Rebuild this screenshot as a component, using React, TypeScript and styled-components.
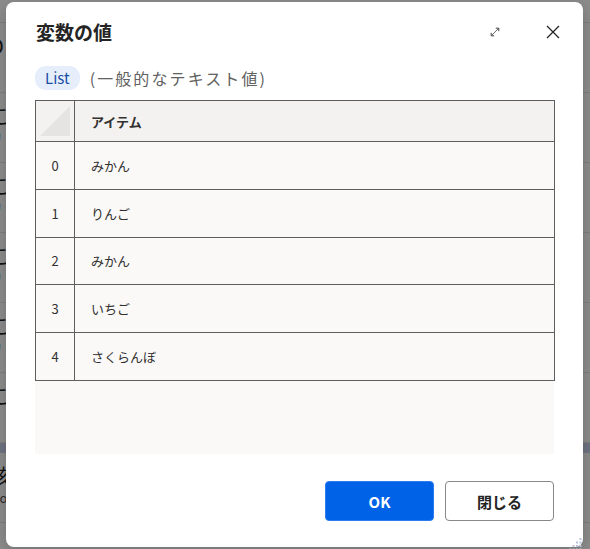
import React from "react";
import styled, { createGlobalStyle } from "styled-components";

const GlobalStyle = createGlobalStyle`
  html, body {
    margin: 0;
    padding: 0;
    width: 590px;
    height: 549px;
    overflow: hidden;
  }
  body {
    font-family: "Noto Sans CJK JP", "Noto Sans", sans-serif;
    color: #242424;
  }
`;

const items = ["みかん", "りんご", "みかん", "いちご", "さくらんぼ"];

const bgRows = [
  { big: "D", small: "E" },
  { big: "こ", small: "リ" },
  { big: "こ", small: "リ" },
  { big: "こ", small: "リ" },
  { big: "こ", small: "リ" },
  { big: "こ", small: "・" },
];

const App: React.FC = () => {
  return (
    <Screen>
      <GlobalStyle />
      <BackApp>
        <BackSpacer />
        {bgRows.map((r, i) => (
          <BackRow key={i}>
            <BackBig>{r.big}</BackBig>
            <BackSmall>{r.small}</BackSmall>
          </BackRow>
        ))}
        <BackBar />
        <BackRow>
          <BackBig>核</BackBig>
          <BackSmall>No</BackSmall>
        </BackRow>
      </BackApp>
      <Overlay>
        <Dialog>
          <Header>
            <Title>変数の値</Title>
            <HeaderActions>
              <IconButton aria-label="expand">
                <svg width="12" height="12" viewBox="0 0 12 12" fill="none">
                  <path d="M2.5 9.5 L9.5 2.5" stroke="#5a5a5a" strokeWidth="0.9" />
                  <path d="M6.8 2.2 H9.8 V5.2" stroke="#424242" strokeWidth="1" />
                  <path d="M2.2 6.8 V9.8 H5.2" stroke="#424242" strokeWidth="1" />
                </svg>
              </IconButton>
              <IconButton aria-label="close">
                <svg width="16" height="16" viewBox="0 0 16 16" fill="none">
                  <path d="M2 2 L14 14 M14 2 L2 14" stroke="#242424" strokeWidth="1.3" />
                </svg>
              </IconButton>
            </HeaderActions>
          </Header>
          <TypeLine>
            <Badge>List</Badge>
            <TypeText>(一般的なテキスト値)</TypeText>
          </TypeLine>
          <TableArea>
            <Table>
              <thead>
                <tr>
                  <CornerCell>
                    <svg width="30" height="30" viewBox="0 0 30 30">
                      <polygon points="0,30 30,30 30,0" fill="#e6e4e2" />
                    </svg>
                  </CornerCell>
                  <HeadCell>アイテム</HeadCell>
                </tr>
              </thead>
              <tbody>
                {items.map((it, i) => (
                  <tr key={i}>
                    <IndexCell>{i}</IndexCell>
                    <ValueCell>{it}</ValueCell>
                  </tr>
                ))}
              </tbody>
            </Table>
          </TableArea>
          <Footer>
            <PrimaryButton>OK</PrimaryButton>
            <SecondaryButton>閉じる</SecondaryButton>
          </Footer>
          <Grip>
            <svg width="14" height="14" viewBox="0 0 14 14">
              {[0, 1, 2, 3].map((r) =>
                [0, 1, 2, 3]
                  .filter((c) => c + r >= 3)
                  .map((c) => (
                    <rect key={`${r}-${c}`} x={c * 3.5} y={r * 3.5} width="2" height="2" fill="#b8c4dc" />
                  ))
              )}
            </svg>
          </Grip>
        </Dialog>
      </Overlay>
    </Screen>
  );
};

export default App;

const Screen = styled.div`
  position: relative;
  width: 590px;
  height: 549px;
  overflow: hidden;
  background: #ffffff;
`;

const BackApp = styled.div`
  display: flex;
  flex-direction: column;
  margin-left: -10px;
`;

const BackSpacer = styled.div`
  height: 22px;
  border-bottom: 1px solid #e6e6e6;
`;

const BackRow = styled.div`
  display: flex;
  flex-direction: column;
  height: 70px;
  padding-top: 10px;
  box-sizing: border-box;
  border-bottom: 1px solid #e6e6e6;
`;

const BackBig = styled.div`
  font-size: 20px;
  line-height: 26px;
  color: #222;
`;

const BackSmall = styled.div`
  font-size: 13px;
  line-height: 18px;
  color: #555;
`;

const BackBar = styled.div`
  height: 10px;
  background: #c8d4ec;
`;

const Overlay = styled.div`
  position: absolute;
  inset: 0;
  background: rgba(0, 0, 0, 0.45);
  padding: 2px 6px 0 6px;
`;

const Dialog = styled.div`
  position: relative;
  width: 577px;
  height: 545px;
  box-sizing: border-box;
  background: #ffffff;
  border-radius: 8px;
  padding: 14px 29px 0 29px;
  display: flex;
  flex-direction: column;
  box-shadow: 0 4px 16px rgba(0, 0, 0, 0.2);
`;

const Header = styled.div`
  display: flex;
  align-items: center;
  justify-content: space-between;
  height: 32px;
`;

const Title = styled.h2`
  margin: 0;
  font-size: 19px;
  font-weight: 700;
  color: #242424;
  padding-left: 1px;
  margin-top: -2px;
`;

const HeaderActions = styled.div`
  display: flex;
  align-items: center;
  gap: 36px;
  margin-right: -10px;
`;

const IconButton = styled.button`
  border: none;
  background: transparent;
  padding: 0;
  width: 22px;
  height: 22px;
  display: flex;
  align-items: center;
  justify-content: center;
`;

const TypeLine = styled.div`
  display: flex;
  align-items: center;
  gap: 10px;
  margin-top: 18px;
`;

const Badge = styled.span`
  background: #e6eefb;
  color: #1b4ea3;
  font-size: 15px;
  border-radius: 11px;
  height: 24px;
  line-height: 24px;
  padding: 0 10px 0 10px;
`;

const TypeText = styled.span`
  font-size: 16px;
  letter-spacing: 2.1px;
  color: #616161;
`;

const TableArea = styled.div`
  margin-top: 10px;
  height: 354px;
  background: #faf9f8;
`;

const Table = styled.table`
  width: 520px;
  border-collapse: collapse;
  font-size: 13px;
  color: #323130;
  border: 1px solid #605e5c;
`;

const CornerCell = styled.th`
  width: 34px;
  height: 40px;
  padding: 0 0 0 4px;
  background: #f3f2f1;
  border: 1px solid #605e5c;
  vertical-align: middle;
  text-align: left;
  svg {
    display: block;
  }
`;

const HeadCell = styled.th`
  height: 40px;
  padding: 0 16px;
  background: #f3f2f1;
  border: 1px solid #605e5c;
  text-align: left;
  font-weight: 700;
`;

const IndexCell = styled.td`
  height: 46.8px;
  padding: 0;
  text-align: center;
  background: #faf9f8;
  border: 1px solid #605e5c;
`;

const ValueCell = styled.td`
  height: 46.8px;
  padding: 0 16px;
  background: #faf9f8;
  border: 1px solid #605e5c;
`;

const Footer = styled.div`
  display: flex;
  justify-content: flex-end;
  gap: 11px;
  margin-top: 27px;
`;

const BaseButton = styled.button`
  width: 109px;
  height: 40px;
  border-radius: 4px;
  font-family: "Noto Sans CJK JP", "Noto Sans", sans-serif;
  font-size: 15px;
  font-weight: 700;
  box-sizing: border-box;
`;

const PrimaryButton = styled(BaseButton)`
  background: #0062e6;
  color: #ffffff;
  border: 1px solid #2a7cf0;
`;

const SecondaryButton = styled(BaseButton)`
  background: #ffffff;
  color: #242424;
  border: 1px solid #8a8886;
`;

const Grip = styled.div`
  position: absolute;
  right: 0;
  bottom: 0;
  width: 14px;
  height: 14px;
`;
